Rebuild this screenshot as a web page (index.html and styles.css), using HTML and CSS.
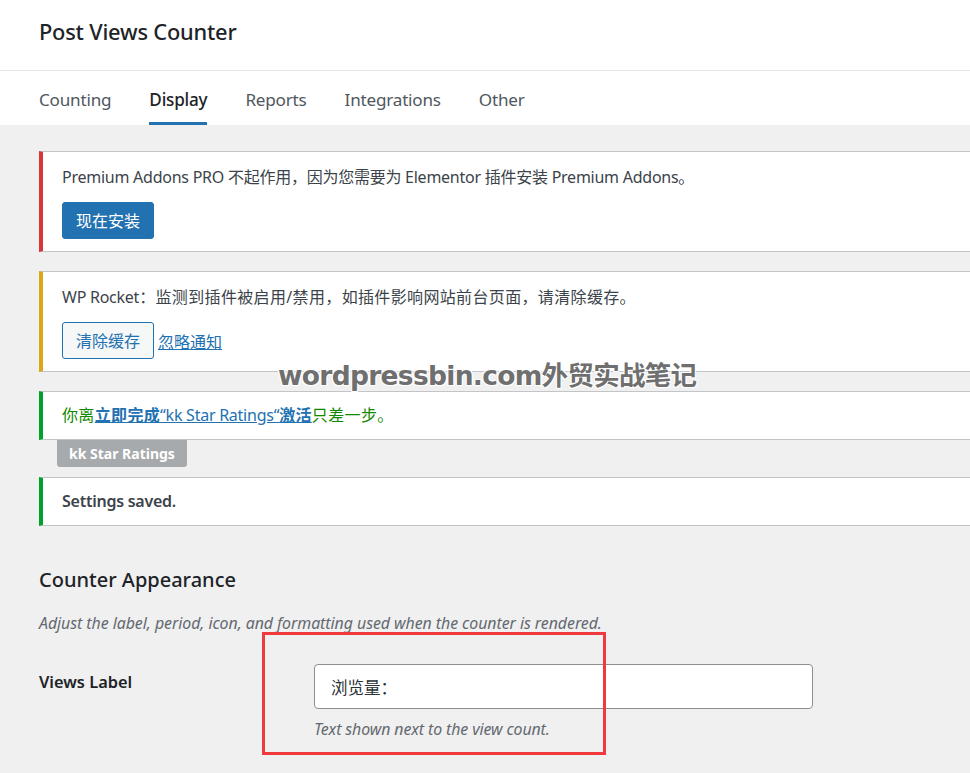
FILE: index.html
```html
<!DOCTYPE html>
<html lang="zh-CN">
<head>
<meta charset="utf-8">
<title>Post Views Counter</title>
<link rel="stylesheet" href="styles.css">
</head>
<body>
<div class="page">
  <header class="header">
    <h1 class="title">Post Views Counter</h1>
  </header>
  <nav class="tabs">
    <a class="tab">Counting</a>
    <a class="tab active">Display</a>
    <a class="tab">Reports</a>
    <a class="tab">Integrations</a>
    <a class="tab">Other</a>
  </nav>
  <main class="content">
    <div class="notice notice-error">
      <p>Premium Addons PRO 不起作用，因为您需要为 Elementor 插件安装 Premium Addons。</p>
      <div class="actions"><a class="btn btn-primary">现在安装</a></div>
    </div>
    <div class="notice notice-warning">
      <p>WP Rocket<span class="cjk">：监测到插件被启用/禁用，如插件影响网站前台页面，请清除缓存。</span></p>
      <div class="actions"><a class="btn btn-secondary">清除缓存</a><a class="link">忽略通知</a></div>
    </div>
    <div class="notice-group">
      <div class="notice notice-success compact">
        <p class="green"><span class="cjk">你离</span><a class="link"><b class="cjk">立即完成</b>“kk Star Ratings“<b class="cjk">激活</b></a><span class="cjk">只差一步。</span></p>
      </div>
      <span class="badge">kk Star Ratings</span>
    </div>
    <div class="notice notice-success compact">
      <p class="strong">Settings saved.</p>
    </div>

    <section class="section">
      <h2 class="section-title">Counter Appearance</h2>
      <p class="section-desc">Adjust the label, period, icon, and formatting used when the counter is rendered.</p>
      <div class="form-row">
        <div class="form-label">Views Label</div>
        <div class="form-field">
          <div class="input">浏览量：</div>
          <p class="help">Text shown next to the view count.</p>
        </div>
      </div>
    </section>
  </main>
  <div class="watermark">wordpressbin.com外贸实战笔记</div>
  <div class="highlight"></div>
</div>
</body>
</html>
```

FILE: styles.css
```css
* { box-sizing: border-box; }
html, body { margin: 0; padding: 0; }
body {
  background: #f0f0f1;
  font-family: "Noto Sans", "Noto Sans CJK SC", sans-serif;
  color: #3c434a;
  overflow: hidden;
  width: 970px;
  height: 773px;
}
.page { position: relative; width: 970px; height: 773px; }

.header {
  background: #fff;
  height: 71px;
  border-bottom: 1px solid #e6e6e8;
  padding: 0 39px;
  display: flex;
  align-items: center;
}
.title {
  margin: 0;
  margin-top: -7px;
  font-size: 21.8px;
  font-weight: 500;
  color: #1d2327;
  letter-spacing: -0.2px;
}

.tabs {
  background: #fff;
  height: 54px;
  display: flex;
  gap: 38px;
  padding-left: 39px;
}
.tab {
  display: flex;
  align-items: center;
  padding-top: 5px;
  font-size: 17.1px;
  color: #50575e;
  border-bottom: 3px solid transparent;
  letter-spacing: -0.2px;
}
.tab.active {
  color: #1d2327;
  font-weight: 500;
  border-bottom-color: #2271b1;
}

.content { padding: 26px 0 0 39px; }

.notice {
  background: #fff;
  border: 1px solid #c3c4c7;
  border-left-width: 4px;
  border-right: none;
  padding: 14px 20px 12px 19px;
  margin-bottom: 19px;
}
.notice p {
  margin: 0;
  font-size: 16px;
  line-height: 23px;
  letter-spacing: -0.25px;
}
.notice p .cjk { letter-spacing: 0.35px; }
.notice.compact { padding-top: 12px; padding-bottom: 12px; margin-bottom: 0; }
.notice-error { border-left-color: #d63638; }
.notice-warning { border-left-color: #dba617; }
.notice-success { border-left-color: #00a32a; }

.actions {
  display: flex;
  align-items: flex-end;
  gap: 4px;
  margin-top: 13px;
}
.btn {
  display: inline-flex;
  align-items: center;
  justify-content: center;
  height: 37px;
  width: 92px;
  border-radius: 3px;
  font-size: 16px;
  padding-bottom: 2px;
}
.btn-primary { background: #2271b1; color: #fff; border: 1px solid #2271b1; }
.btn-secondary { background: #f6f7f7; color: #2271b1; border: 1px solid #2271b1; }
.link { color: #2271b1; text-decoration: underline; line-height: 23px; }
.actions .link { font-size: 16px; margin-bottom: 5px; }
.green { color: #118a00; }
.green b { font-weight: 700; }
.strong { font-weight: 600; }

.notice-group { margin-bottom: 10px; }
.badge {
  display: inline-block;
  margin-left: 18px;
  background: #a7aaad;
  color: #fff;
  font-weight: 700;
  font-size: 14px;
  line-height: 27px;
  padding: 0 12px;
  border-radius: 0 0 3px 3px;
}

.section { padding-top: 40px; }
.section-title {
  margin: 0;
  font-size: 20px;
  font-weight: 500;
  color: #1d2327;
  line-height: 28px;
}
.section-desc {
  margin: 18px 0 0;
  font-size: 15.9px;
  font-style: italic;
  color: #646970;
  line-height: 23px;
  letter-spacing: -0.05px;
}
.form-row { display: flex; margin-top: 29px; }
.form-label {
  width: 275px;
  flex: none;
  font-size: 16.4px;
  font-weight: 600;
  color: #1d2327;
  padding-top: 6px;
}
.form-field { width: 499px; }
.input {
  height: 45px;
  border: 1px solid #8c8f94;
  border-radius: 4px;
  background: #fff;
  padding: 0 16px;
  display: flex;
  align-items: center;
  font-size: 16.5px;
  color: #2c3338;
}
.help {
  margin: 9px 0 0;
  font-size: 15.9px;
  font-style: italic;
  color: #646970;
  line-height: 23px;
  letter-spacing: -0.1px;
}

.watermark {
  position: absolute;
  left: 278px;
  top: 360px;
  font-family: "DejaVu Sans", "Noto Sans CJK SC", sans-serif;
  font-weight: 700;
  font-size: 26.5px;
  line-height: 32px;
  color: #6f6f6f;
  letter-spacing: -0.7px;
  text-shadow: 1px 1px 0 #fff, -1px -1px 0 #fff, 1px -1px 0 #fff, -1px 1px 0 #fff;
}
.highlight {
  position: absolute;
  left: 262px;
  top: 632px;
  width: 344px;
  height: 123px;
  border: 3px solid #f03a3d;
}
```
